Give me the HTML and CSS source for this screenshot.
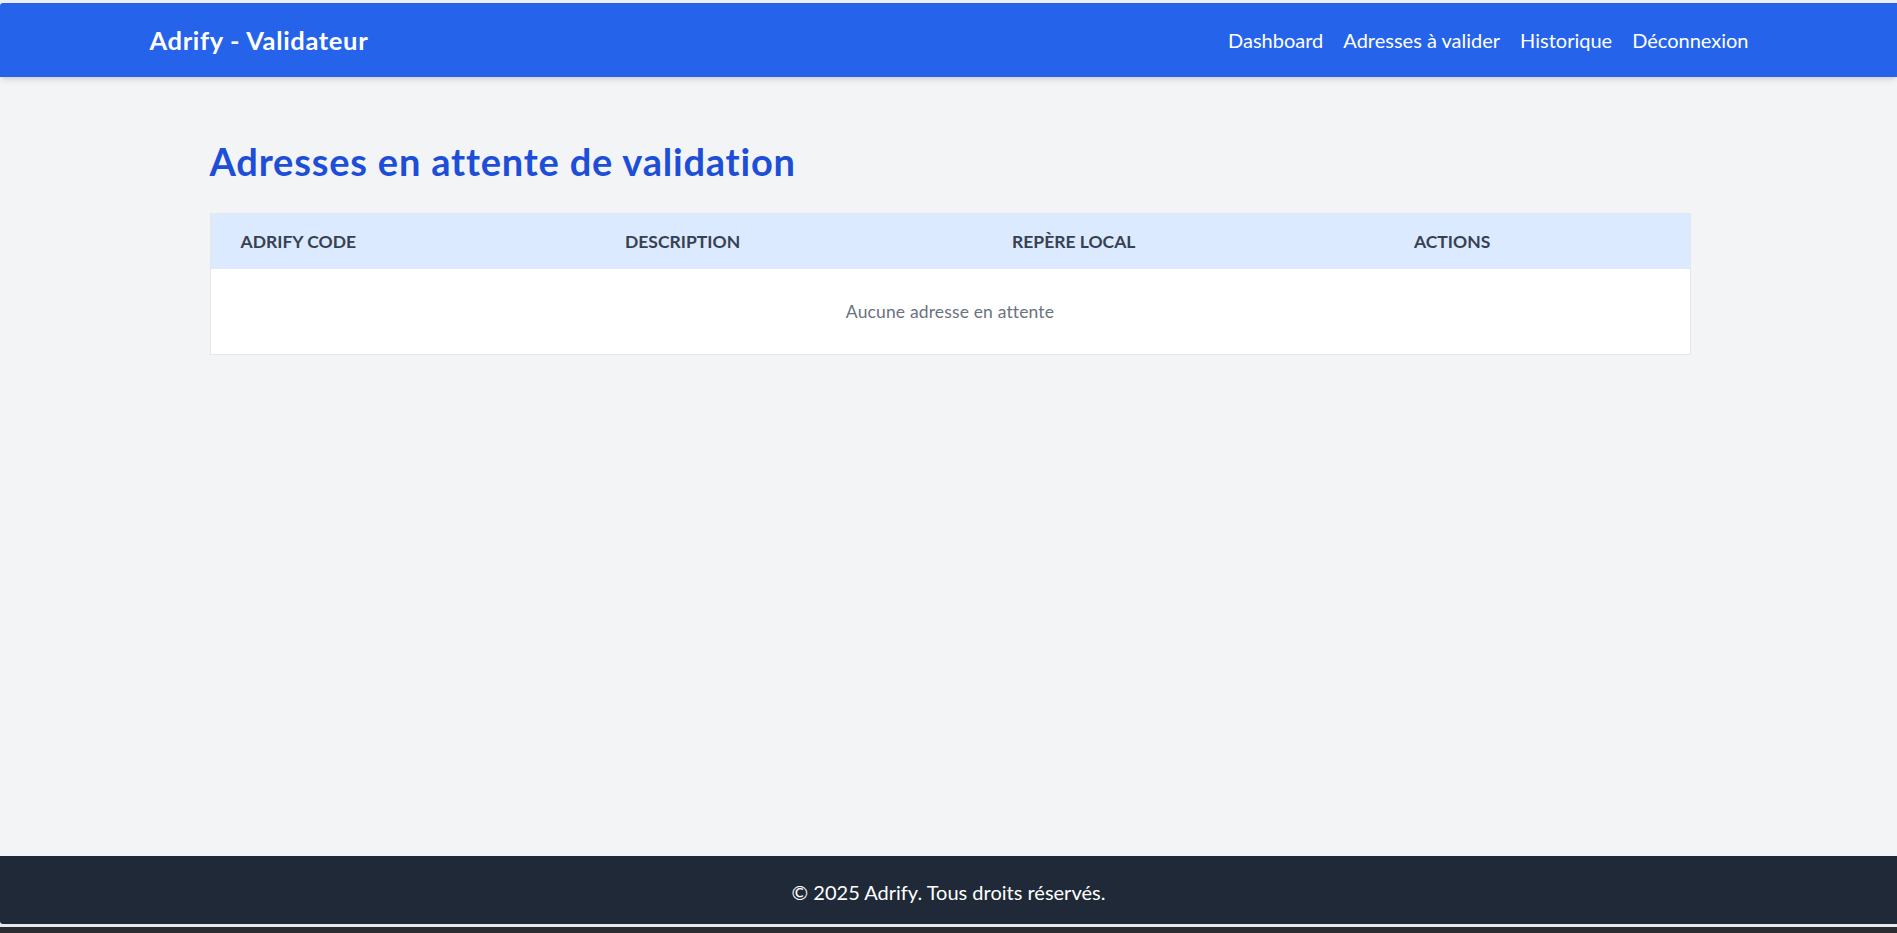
FILE: index.html
```html
<!DOCTYPE html>
<html lang="fr">
<head>
<meta charset="utf-8">
<title>Adrify - Validateur</title>
<link rel="stylesheet" href="styles.css">
</head>
<body>
<div class="page">
  <div class="top-edge"></div>
  <nav class="navbar">
    <div class="nav-inner">
      <a class="brand" href="#">Adrify - Validateur</a>
      <div class="nav-links">
        <a href="#">Dashboard</a>
        <a href="#">Adresses à valider</a>
        <a href="#">Historique</a>
        <a href="#">Déconnexion</a>
      </div>
    </div>
  </nav>
  <main class="main">
    <div class="content">
      <h1 class="title">Adresses en attente de validation</h1>
      <table class="table">
        <colgroup>
          <col class="c1"><col class="c2"><col class="c3"><col class="c4">
        </colgroup>
        <thead>
          <tr>
            <th>Adrify Code</th>
            <th>Description</th>
            <th>Repère local</th>
            <th>Actions</th>
          </tr>
        </thead>
        <tbody>
          <tr>
            <td colspan="4" class="empty">Aucune adresse en attente</td>
          </tr>
        </tbody>
      </table>
    </div>
  </main>
  <footer class="footer">© 2025 Adrify. Tous droits réservés.</footer>
  <div class="bottom-edge"></div>
  <div class="bottom-dark"></div>
</div>
</body>
</html>
```

FILE: styles.css
```css
* { box-sizing: border-box; }
html, body { margin: 0; padding: 0; }
body {
  font-family: Lato, "Noto Sans", "Liberation Sans", sans-serif;
  background: #f3f4f6;
}
.page {
  display: flex;
  flex-direction: column;
  min-height: 100vh;
}
.top-edge { height: 3px; background: #eceef1; }
.navbar {
  height: 74px;
  background: #2563eb;
  box-shadow: 0 4px 6px -1px rgba(0,0,0,0.1), 0 2px 4px -2px rgba(0,0,0,0.1);
  position: relative;
  z-index: 1;
  border-top-left-radius: 3px;
}
.nav-inner {
  width: 1600px;
  margin: 0 auto;
  height: 100%;
  display: flex;
  align-items: center;
  justify-content: space-between;
}
.brand {
  color: #fff;
  text-decoration: none;
  font-weight: 700;
  font-size: 25.5px;
  letter-spacing: 0.65px;
  line-height: 35px;
  padding-left: 1px;
}
.nav-links { display: flex; gap: 20px; }
.nav-links a {
  color: #fff;
  text-decoration: none;
  font-size: 20px;
  line-height: 28px;
}
.main { flex: 1; }
.content {
  width: 1480px;
  margin: 0 auto;
  padding-top: 62px;
  position: relative;
  left: 1px;
}
.title {
  margin: 0 0 29px;
  color: #1d4ed8;
  font-size: 38px;
  letter-spacing: 0.8px;
  line-height: 45px;
  font-weight: 700;
}
.table {
  width: 1480px;
  border-collapse: collapse;
  table-layout: fixed;
  background: #fff;
  border: 1px solid #e5e7eb;
}
.c1 { width: 385px; }
.c2 { width: 387px; }
.c3 { width: 402px; }
.c4 { width: 306px; }
.table th {
  background: #dbeafe;
  color: #374151;
  text-align: left;
  text-transform: uppercase;
  font-weight: 700;
  font-size: 17.5px;
  line-height: 25px;
  height: 55px;
  padding: 15px 30px;
}
.table td.empty {
  text-align: center;
  color: #6b7280;
  font-size: 17.5px;
  letter-spacing: 0.15px;
  line-height: 25px;
  height: 85px;
  padding: 30px;
}
.footer {
  height: 68px;
  background: #1f2937;
  color: #fff;
  font-size: 20px;
  display: flex;
  align-items: center;
  justify-content: center;
  padding-top: 3px;
  border-bottom-left-radius: 3px;
}
.bottom-edge { height: 3px; background: #e9eaec; }
.bottom-dark { height: 6px; background: #2a2c31; }
```
